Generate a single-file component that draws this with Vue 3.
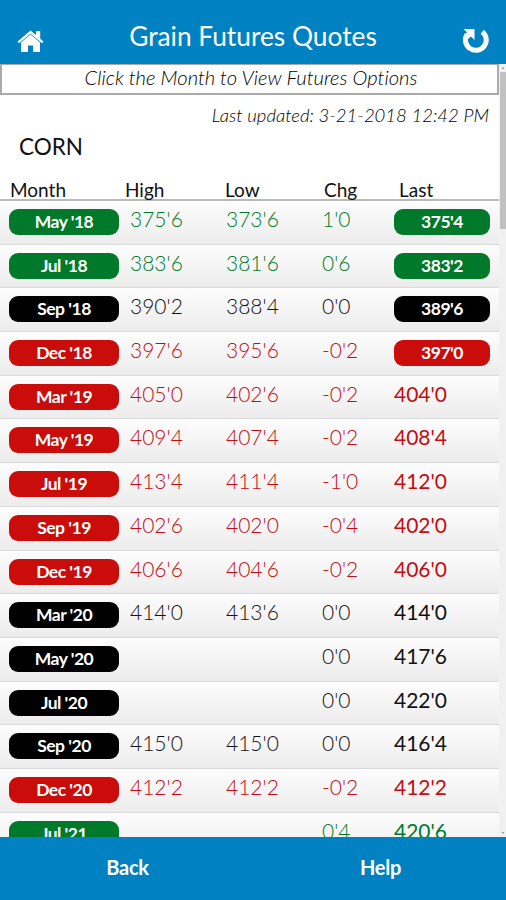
<script setup>
import { ref } from 'vue';

const columns = ['Month', 'High', 'Low', 'Chg', 'Last'];

// tone: up / flat / down, traded rows get a badge in the Last column
const quotes = ref([
  { month: "May '18", high: "375'6", low: "373'6", chg: "1'0", last: "375'4", tone: 'up', traded: true },
  { month: "Jul '18", high: "383'6", low: "381'6", chg: "0'6", last: "383'2", tone: 'up', traded: true },
  { month: "Sep '18", high: "390'2", low: "388'4", chg: "0'0", last: "389'6", tone: 'flat', traded: true },
  { month: "Dec '18", high: "397'6", low: "395'6", chg: "-0'2", last: "397'0", tone: 'down', traded: true },
  { month: "Mar '19", high: "405'0", low: "402'6", chg: "-0'2", last: "404'0", tone: 'down' },
  { month: "May '19", high: "409'4", low: "407'4", chg: "-0'2", last: "408'4", tone: 'down' },
  { month: "Jul '19", high: "413'4", low: "411'4", chg: "-1'0", last: "412'0", tone: 'down' },
  { month: "Sep '19", high: "402'6", low: "402'0", chg: "-0'4", last: "402'0", tone: 'down' },
  { month: "Dec '19", high: "406'6", low: "404'6", chg: "-0'2", last: "406'0", tone: 'down' },
  { month: "Mar '20", high: "414'0", low: "413'6", chg: "0'0", last: "414'0", tone: 'flat' },
  { month: "May '20", high: '', low: '', chg: "0'0", last: "417'6", tone: 'flat' },
  { month: "Jul '20", high: '', low: '', chg: "0'0", last: "422'0", tone: 'flat' },
  { month: "Sep '20", high: "415'0", low: "415'0", chg: "0'0", last: "416'4", tone: 'flat' },
  { month: "Dec '20", high: "412'2", low: "412'2", chg: "-0'2", last: "412'2", tone: 'down' },
  { month: "Jul '21", high: '', low: '', chg: "0'4", last: "420'6", tone: 'up' },
]);
</script>

<template>
  <div class="app">
    <header class="topbar">
      <svg class="icon-home" viewBox="0 0 27 23" width="27" height="23">
        <path d="M13.5 0.5 L0.5 11.5 L2 13.2 L13.5 3.7 L25 13.2 L26.5 11.5 L23.2 8.7 V1 H19 V5.1 Z" />
        <path d="M13.5 4.6 L4 12.4 V22 H11 V15.5 H16 V22 H23 V12.4 Z" />
      </svg>
      <h1 class="title">Grain Futures Quotes</h1>
      <svg class="icon-refresh" viewBox="0 0 28 27" width="28" height="27">
        <path class="arc" d="M20.2 4.7 A10.4 10.4 0 1 1 5.1 7.3" />
        <path class="head" d="M1.5 2 H12.5 V13 L9 9.5 L6 12 L2.6 8.2 L5 5.5 Z" />
      </svg>
    </header>

    <div class="body">
      <main class="content">
        <div class="hint">Click the Month to View Futures Options</div>
        <div class="updated">Last updated: 3-21-2018 12:42 PM</div>
        <h2 class="commodity">CORN</h2>

        <div class="grid head-row">
          <span v-for="col in columns" :key="col">{{ col }}</span>
        </div>

        <div v-for="q in quotes" :key="q.month" class="grid row" :class="q.tone">
          <span class="pill">{{ q.month }}</span>
          <span class="num">{{ q.high }}</span>
          <span class="num">{{ q.low }}</span>
          <span class="num">{{ q.chg }}</span>
          <span v-if="q.traded" class="pill">{{ q.last }}</span>
          <span v-else class="num last">{{ q.last }}</span>
        </div>
      </main>

      <div class="scrollbar">
        <i class="arrow arrow-up" />
        <i class="thumb" />
        <i class="arrow arrow-down" />
      </div>
    </div>

    <footer class="bottombar">
      <span>Back</span>
      <span>Help</span>
    </footer>
  </div>
</template>

<style>
body {
  margin: 0;
  overflow: hidden;
}
</style>

<style scoped>
.app {
  display: flex;
  flex-direction: column;
  width: 506px;
  height: 900px;
  overflow: hidden;
  background: #fff;
  color: #111;
  font-family: Lato, "Liberation Sans", sans-serif;
  font-variant-ligatures: none;
}

/* Top bar */
.topbar {
  display: flex;
  align-items: flex-start;
  justify-content: space-between;
  box-sizing: border-box;
  height: 64px;
  flex-shrink: 0;
  padding: 0 16px 0 17px;
  background: #0081c1;
  color: #fff;
}
.icon-home {
  margin-top: 30px;
  fill: #fff;
}
.title {
  margin: 20px 0 0;
  font-size: 26.3px;
  line-height: 32px;
  font-weight: 400;
  white-space: nowrap;
}
.icon-refresh {
  margin-top: 27px;
}
.arc {
  fill: none;
  stroke: #fff;
  stroke-width: 5;
}
.head {
  fill: #fff;
}

/* Scrolling area */
.body {
  display: flex;
  height: 773px;
  overflow: hidden;
}
.content {
  width: 499px;
  flex-shrink: 0;
}

.hint {
  box-sizing: border-box;
  height: 31px;
  padding-left: 3px;
  border: 2px solid #aaa;
  border-top-width: 1px;
  font-size: 20.2px;
  line-height: 25px;
  font-weight: 300;
  font-style: italic;
  text-align: center;
}
.updated {
  padding: 8px 10px 0 0;
  font-size: 18.5px;
  line-height: 24px;
  font-weight: 300;
  font-style: italic;
  text-align: right;
}
.hint,
.updated {
  color: #000;
}
.commodity {
  margin: 6px 0 0 19px;
  font-size: 22.5px;
  line-height: 28px;
  font-weight: 400;
}

.grid {
  display: grid;
  grid-template-columns: 110px 96px 96px 72px 96px;
  box-sizing: border-box;
}
.head-row {
  height: 40px;
  padding: 18px 0 0 9px;
  border-bottom: 2px solid #bbb;
  font-size: 19px;
  line-height: 22px;
}
.head-row span:nth-child(1) { padding-left: 1px; }
.head-row span:nth-child(2) { padding-left: 6px; }
.head-row span:nth-child(3) { padding-left: 10px; }
.head-row span:nth-child(4) { padding-left: 13px; }
.head-row span:nth-child(5) { padding-left: 16px; }

/* Quote rows */
.row {
  grid-template-columns: 121px 96px 96px 72px 96px;
  height: 43.7px;
  padding-left: 9px;
  border-bottom: 1px solid #dadada;
  background: linear-gradient(#fdfdfd, #ececec);
}
.pill {
  width: 110px;
  height: 26px;
  margin-top: 8px;
  border-radius: 9px;
  background: #000;
  color: #fff;
  font-size: 17.5px;
  line-height: 26px;
  font-weight: 700;
  letter-spacing: -0.5px;
  text-align: center;
}
.pill:last-child {
  width: 96px;
}
.num {
  padding-top: 6px;
  font-size: 21px;
  line-height: 24px;
  font-weight: 300;
}
.last {
  font-weight: 400;
}

.up .num { color: #007a2a; }
.up .pill { background: #007a2a; }
.down .num { color: #c30d12; }
.down .pill { background: #ca0d0a; }

/* Scrollbar */
.scrollbar {
  display: flex;
  flex-direction: column;
  align-items: center;
  width: 7px;
  height: 773px;
  background: #f1f1f1;
}
.arrow {
  margin: 3px 0;
  border: 1.5px solid transparent;
}
.arrow-up {
  border-top: 0;
  border-bottom: 2px solid #777;
}
.arrow-down {
  margin-top: auto;
  border-bottom: 0;
  border-top: 2px solid #777;
}
.thumb {
  width: 6px;
  height: 157px;
  background: #c1c1c1;
}

/* Bottom bar */
.bottombar {
  display: grid;
  grid-template-columns: 1fr 1fr;
  height: 63px;
  flex-shrink: 0;
  background: #0081c1;
  color: #fff;
  font-size: 20px;
  line-height: 61px;
  font-weight: 700;
  letter-spacing: -0.3px;
  text-align: center;
}
.bottombar span {
  padding-left: 2px;
}
</style>
